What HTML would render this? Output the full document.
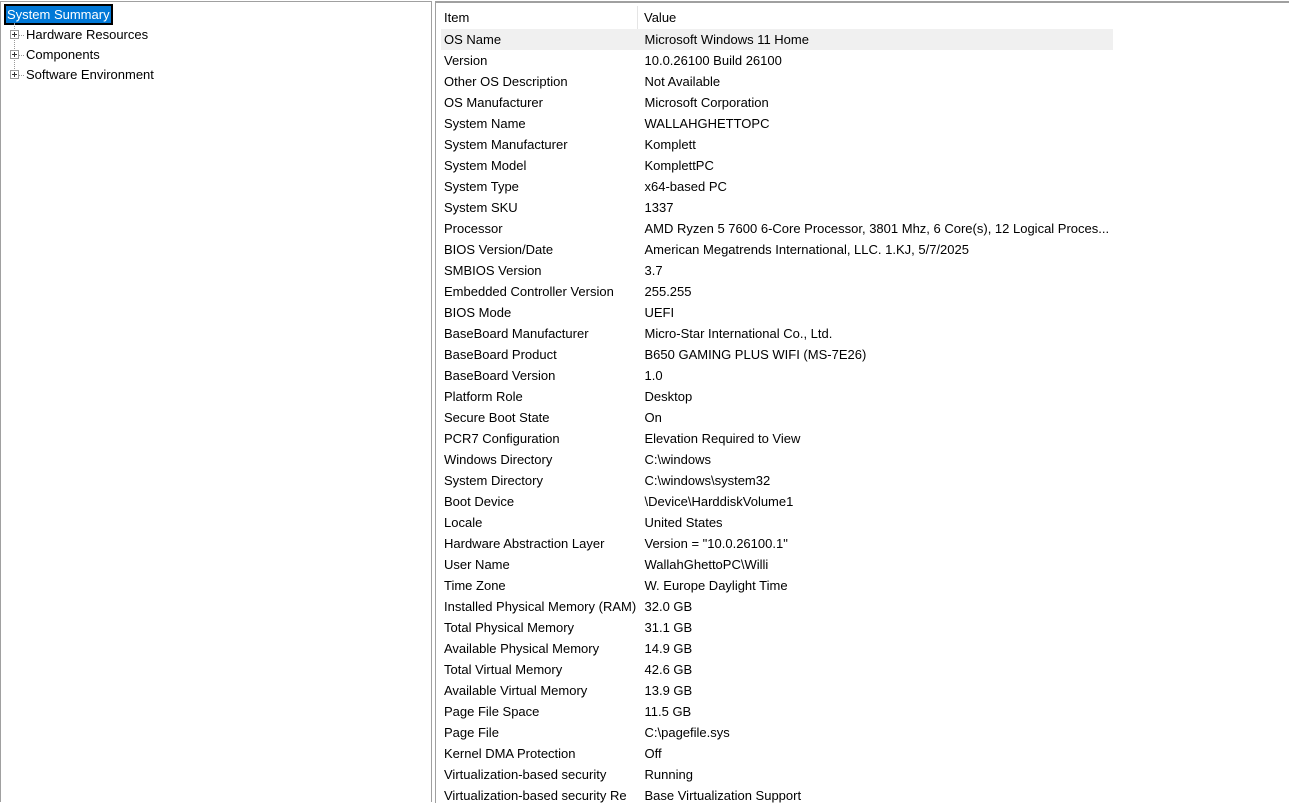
<!DOCTYPE html><html><head><style>
body{margin:0;width:1289px;height:796px;overflow:hidden;background:#fff;font-family:"Liberation Sans",sans-serif;font-size:13px;color:#000;position:relative}
.l{position:absolute;left:0;top:1px;width:430px;height:800px;border-top:1px solid #a0a0a0;border-left:1px solid #a0a0a0;border-right:1px solid #a0a0a0}
.r{position:absolute;left:435px;top:1px;width:860px;height:800px;border-top:2px solid #a0a0a0;border-left:1px solid #a0a0a0}
.sel{position:absolute;left:6px;top:6px;height:17px;line-height:17px;padding:0 1px;background:#0078d7;color:#fff;outline:2px solid #000}
.t{position:absolute;left:26px;height:20px;line-height:20px}
.pb{position:absolute;left:10px;width:7px;height:7px;border:1px solid #999;background:#fff}
.pb:before{content:"";position:absolute;left:1px;top:3px;width:5px;height:1px;background:#333}
.pb:after{content:"";position:absolute;left:3px;top:1px;width:1px;height:5px;background:#333}
.dl{position:absolute;left:14px;top:23px;height:52px;border-left:1px dotted #999}
.dh{position:absolute;left:19px;width:5px;border-top:1px dotted #999}
table{position:absolute;left:441px;top:6px;border-collapse:collapse}
td{height:21px;padding:0 0 0 3px;white-space:nowrap;line-height:21px}
td.a{width:193px}td.b{width:468px;padding-left:7px}
tr.h td{height:23px}
tr.h td.a{border-right:1px solid #e5e5e5}
tr.h td.b{padding-left:6px}
tr.s td{background:#f0f0f0}
</style></head><body>
<div class="l"></div><div class="r"></div>
<div class="sel">System Summary</div>
<div class="dl"></div>
<div class="pb" style="top:30px"></div><div class="dh" style="top:35px"></div><div class="t" style="top:25px">Hardware Resources</div>
<div class="pb" style="top:50px"></div><div class="dh" style="top:55px"></div><div class="t" style="top:45px">Components</div>
<div class="pb" style="top:70px"></div><div class="dh" style="top:75px"></div><div class="t" style="top:65px">Software Environment</div>
<table>
<tr class="h"><td class="a">Item</td><td class="b">Value</td></tr>
<tr class="s"><td class="a">OS Name</td><td class="b">Microsoft Windows 11 Home</td></tr>
<tr><td class="a">Version</td><td class="b">10.0.26100 Build 26100</td></tr>
<tr><td class="a">Other OS Description</td><td class="b">Not Available</td></tr>
<tr><td class="a">OS Manufacturer</td><td class="b">Microsoft Corporation</td></tr>
<tr><td class="a">System Name</td><td class="b">WALLAHGHETTOPC</td></tr>
<tr><td class="a">System Manufacturer</td><td class="b">Komplett</td></tr>
<tr><td class="a">System Model</td><td class="b">KomplettPC</td></tr>
<tr><td class="a">System Type</td><td class="b">x64-based PC</td></tr>
<tr><td class="a">System SKU</td><td class="b">1337</td></tr>
<tr><td class="a">Processor</td><td class="b">AMD Ryzen 5 7600 6-Core Processor, 3801 Mhz, 6 Core(s), 12 Logical Proces...</td></tr>
<tr><td class="a">BIOS Version/Date</td><td class="b">American Megatrends International, LLC. 1.KJ, 5/7/2025</td></tr>
<tr><td class="a">SMBIOS Version</td><td class="b">3.7</td></tr>
<tr><td class="a">Embedded Controller Version</td><td class="b">255.255</td></tr>
<tr><td class="a">BIOS Mode</td><td class="b">UEFI</td></tr>
<tr><td class="a">BaseBoard Manufacturer</td><td class="b">Micro-Star International Co., Ltd.</td></tr>
<tr><td class="a">BaseBoard Product</td><td class="b">B650 GAMING PLUS WIFI (MS-7E26)</td></tr>
<tr><td class="a">BaseBoard Version</td><td class="b">1.0</td></tr>
<tr><td class="a">Platform Role</td><td class="b">Desktop</td></tr>
<tr><td class="a">Secure Boot State</td><td class="b">On</td></tr>
<tr><td class="a">PCR7 Configuration</td><td class="b">Elevation Required to View</td></tr>
<tr><td class="a">Windows Directory</td><td class="b">C:\windows</td></tr>
<tr><td class="a">System Directory</td><td class="b">C:\windows\system32</td></tr>
<tr><td class="a">Boot Device</td><td class="b">\Device\HarddiskVolume1</td></tr>
<tr><td class="a">Locale</td><td class="b">United States</td></tr>
<tr><td class="a">Hardware Abstraction Layer</td><td class="b">Version = "10.0.26100.1"</td></tr>
<tr><td class="a">User Name</td><td class="b">WallahGhettoPC\Willi</td></tr>
<tr><td class="a">Time Zone</td><td class="b">W. Europe Daylight Time</td></tr>
<tr><td class="a">Installed Physical Memory (RAM)</td><td class="b">32.0 GB</td></tr>
<tr><td class="a">Total Physical Memory</td><td class="b">31.1 GB</td></tr>
<tr><td class="a">Available Physical Memory</td><td class="b">14.9 GB</td></tr>
<tr><td class="a">Total Virtual Memory</td><td class="b">42.6 GB</td></tr>
<tr><td class="a">Available Virtual Memory</td><td class="b">13.9 GB</td></tr>
<tr><td class="a">Page File Space</td><td class="b">11.5 GB</td></tr>
<tr><td class="a">Page File</td><td class="b">C:\pagefile.sys</td></tr>
<tr><td class="a">Kernel DMA Protection</td><td class="b">Off</td></tr>
<tr><td class="a">Virtualization-based security</td><td class="b">Running</td></tr>
<tr><td class="a">Virtualization-based security Re</td><td class="b">Base Virtualization Support</td></tr>
</table>
</body></html>
